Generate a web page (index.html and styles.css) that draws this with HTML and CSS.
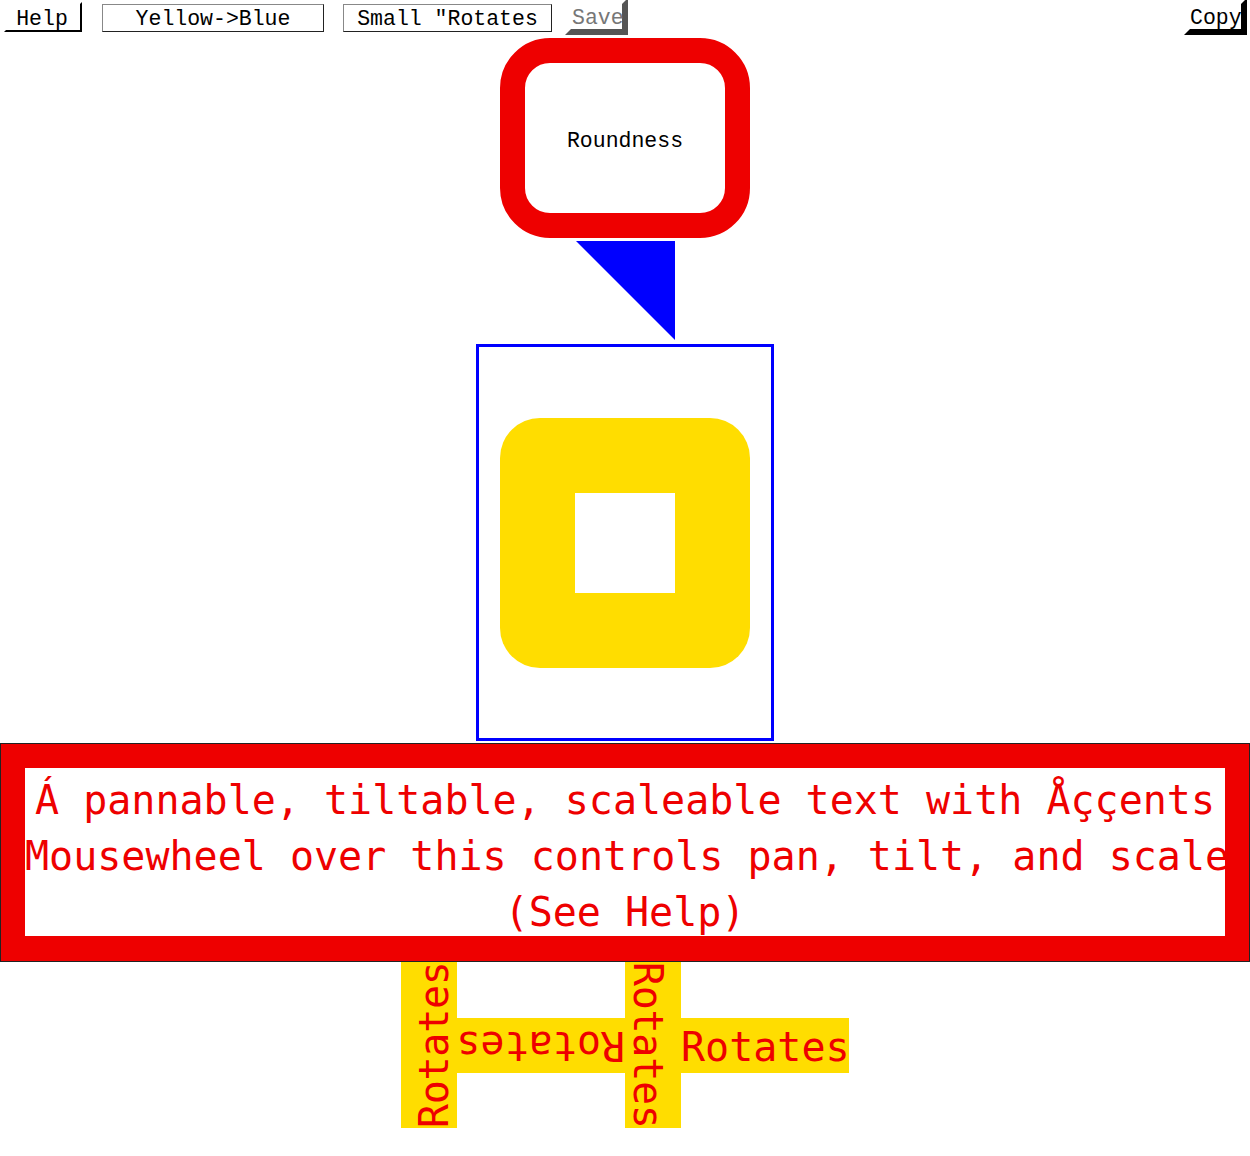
FILE: index.html
```html
<!DOCTYPE html>
<html>
<head>
<meta charset="utf-8">
<link rel="stylesheet" href="styles.css">
</head>
<body>
<div class="topbar">
  <div class="btn btn-help">Help</div>
  <div class="btn btn-box btn-yb">Yellow-&gt;Blue</div>
  <div class="btn btn-box btn-small">Small "Rotates</div>
  <div class="btn btn-shadow btn-save">Save</div>
  <div class="spacer"></div>
  <div class="btn btn-shadow btn-copy">Copy</div>
</div>
<div class="stage">
  <div class="round"><span>Roundness</span></div>
  <svg class="tri" width="99" height="99" viewBox="0 0 99 99"><polygon points="0,0 99,0 99,99" fill="#0000ff"/></svg>
  <div class="bluebox">
    <div class="yellow"><div class="hole"></div></div>
  </div>
  <div class="frame">
    <div class="frame-inner">
      <div class="line">Á pannable, tiltable, scaleable text with Åççents</div>
      <div class="line">Mousewheel over this controls pan, tilt, and scale</div>
      <div class="line">(See Help)</div>
    </div>
  </div>
  <div class="rotrow">
    <div class="rot rot-up">Rotates</div>
    <div class="rot rot-flip">Rotates</div>
    <div class="rot rot-down">Rotates</div>
    <div class="rot rot-norm">Rotates</div>
  </div>
</div>
</body>
</html>
```
FILE: styles.css
```css
html, body {
  margin: 0;
  padding: 0;
  background: #ffffff;
}
body {
  width: 1250px;
  font-family: "Liberation Mono", "Courier New", monospace;
}
.topbar {
  display: flex;
  align-items: flex-start;
  height: 38px;
  padding: 0 3px 0 4px;
  box-sizing: border-box;
}
.spacer { flex: 1; }
.btn {
  box-sizing: border-box;
  font-size: 21.5px;
  color: #000;
  text-align: center;
  white-space: pre;
}
.btn-help {
  margin-top: 2px;
  width: 78px;
  height: 30px;
  line-height: 30px;
  padding-right: 2px;
  border-top: 2px solid transparent;
  border-left: 2px solid transparent;
  border-right: 2px solid #000;
  border-bottom: 2px solid #000;
}
.btn-box {
  margin-top: 4px;
  height: 28px;
  line-height: 29px;
  border: 1px solid #222;
  border-top-color: #888;
  border-left-color: #888;
}
.btn-yb {
  margin-left: 20px;
  width: 222px;
}
.btn-small {
  margin-left: 19px;
  width: 209px;
}
.btn-shadow {
  margin-top: -2px;
  width: 63px;
  height: 37px;
  line-height: 28px;
  padding-left: 1px;
  text-align: left;
  border-top: 6px solid transparent;
  border-left: 6px solid transparent;
  border-right: 6px solid #000;
  border-bottom: 6px solid #000;
}
.btn-save {
  margin-left: 13px;
  color: #777;
  border-right-color: #555;
  border-bottom-color: #555;
}
.btn-copy {
  padding-left: 0;
}

.stage {
  display: flex;
  flex-direction: column;
  align-items: center;
}
.round {
  box-sizing: border-box;
  width: 250px;
  height: 200px;
  border: 25px solid #ee0000;
  border-radius: 50px;
  display: flex;
  align-items: center;
  justify-content: center;
  font-size: 21.5px;
  color: #000;
}
.round span { margin-top: 5px; }
.tri {
  display: block;
  margin-top: 3px;
}
.bluebox {
  box-sizing: border-box;
  margin-top: 4px;
  width: 298px;
  height: 397px;
  border: 3px solid #0000ff;
  display: flex;
  align-items: center;
  justify-content: center;
}
.yellow {
  width: 250px;
  height: 250px;
  background: #ffdd00;
  border-radius: 40px;
  display: flex;
  align-items: center;
  justify-content: center;
}
.hole {
  width: 100px;
  height: 100px;
  background: #ffffff;
}
.frame {
  box-sizing: border-box;
  margin-top: 2px;
  width: 1250px;
  height: 219px;
  border: 1px solid #222;
  background: #ee0000;
  padding: 24px;
}
.frame-inner {
  box-sizing: border-box;
  height: 168px;
  padding-top: 4px;
  background: #ffffff;
  font-family: "DejaVu Sans Mono", monospace;
  font-size: 40px;
  line-height: 56px;
  color: #ee0000;
  text-align: center;
}
.line {
  height: 56px;
  white-space: pre;
}
.rotrow {
  display: flex;
  align-items: center;
  height: 166px;
}
.rot {
  box-sizing: border-box;
  font-family: "DejaVu Sans Mono", monospace;
  font-size: 40px;
  color: #ee0000;
  background: #ffdd00;
  text-align: center;
  white-space: pre;
}
.rot-flip, .rot-norm {
  width: 168px;
  height: 55px;
  line-height: 55px;
}
.rot-norm {
  padding-top: 4px;
  line-height: 51px;
}
.rot-flip { transform: rotate(180deg); }
.rot-up, .rot-down {
  writing-mode: vertical-rl;
  width: 56px;
  height: 166px;
  line-height: 46px;
  padding-right: 10px;
  letter-spacing: -0.3px;
}
.rot-up { transform: rotate(180deg); }
```
